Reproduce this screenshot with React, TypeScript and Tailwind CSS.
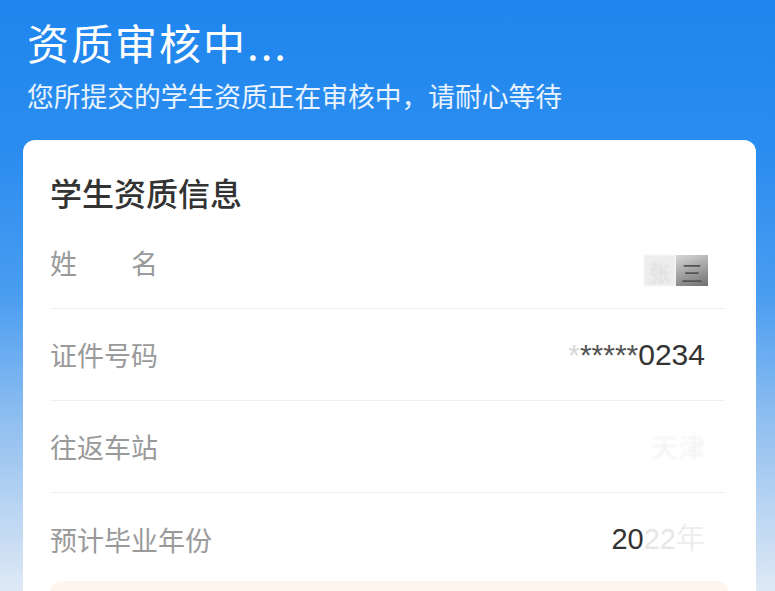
import React from 'react';

const font = "font-['Noto_Sans_CJK_SC','Noto_Sans',sans-serif]";

type Row = {
	label: React.ReactNode;
	value: React.ReactNode;
	last?: boolean;
};

function InfoRow({ label, value, last }: Row) {
	return (
		<div
			className={`flex h-[92px] items-center justify-between ${
				last ? '' : 'border-b border-[#f0f0f0]'
			}`}
		>
			<span className="text-[27px] leading-none text-[#9a9a9a]">{label}</span>
			<div className="flex items-center pr-[20px] text-[27px] leading-none text-[#333]">{value}</div>
		</div>
	);
}

export default function App() {
	const rows: Row[] = [
		{
			label: '姓\u3000\u3000名',
			value: (
				<div className="flex h-[31px] translate-y-[8px] -mr-[3px]">
					<span className="flex w-[32px] items-center justify-center bg-[#ededed] text-[22px] text-[#dcdcdc] blur-[1px]">
						张
					</span>
					<span className="flex w-[32px] items-center justify-center bg-[linear-gradient(160deg,#d8d8d8,#6f6f6f)] text-[22px] text-[#555] blur-[0.5px]">
						三
					</span>
				</div>
			),
		},
		{
			label: '证件号码',
			value: (
				<span className="font-['Liberation_Sans',sans-serif] text-[30px]">
					<span className="text-[#d8d8d8]">*</span>
					<span className="text-[#555]">*****</span>0234
				</span>
			),
		},
		{
			label: '往返车站',
			value: <span className="text-[#f2f2f2] blur-[1px]">天津</span>,
		},
		{
			label: '预计毕业年份',
			value: (
				<span className="font-['Liberation_Sans','Noto_Sans_CJK_SC',sans-serif] text-[29px]">
					20<span className="text-[#e6e6e6]">22</span>
					<span className="text-[#eeeeee]">年</span>
				</span>
			),
			last: true,
		},
	];

	return (
		<div
			className={`${font} h-[591px] w-[775px] overflow-hidden bg-[linear-gradient(180deg,#1e86ee_0%,#2a8cef_25%,#4a9df0_50%,#92c0f0_72%,#dfe9f5_100%)]`}
		>
			<div className="px-[27px] pt-[16px]">
				<h1 className="text-[42px] leading-[52px] font-normal tracking-[2px] text-white">
					资质审核中...
				</h1>
				<p className="mt-[11px] text-[26.75px] leading-[34px] text-white/90">
					您所提交的学生资质正在审核中，请耐心等待
				</p>
			</div>

			<div className="ml-[23px] mr-[19px] mt-[27px] h-[500px] rounded-[12px] bg-white px-[27px] pt-[30px]">
				<h2 className="text-[32px] leading-[44px] font-medium text-[#333]">学生资质信息</h2>
				<div className="mt-[3px] mr-[4px]">
					{rows.map((r, i) => (
						<InfoRow key={i} {...r} />
					))}
				</div>
				<div className="mt-[-4px] h-[40px] rounded-[12px] bg-[#fff4ee]" />
			</div>
		</div>
	);
}
